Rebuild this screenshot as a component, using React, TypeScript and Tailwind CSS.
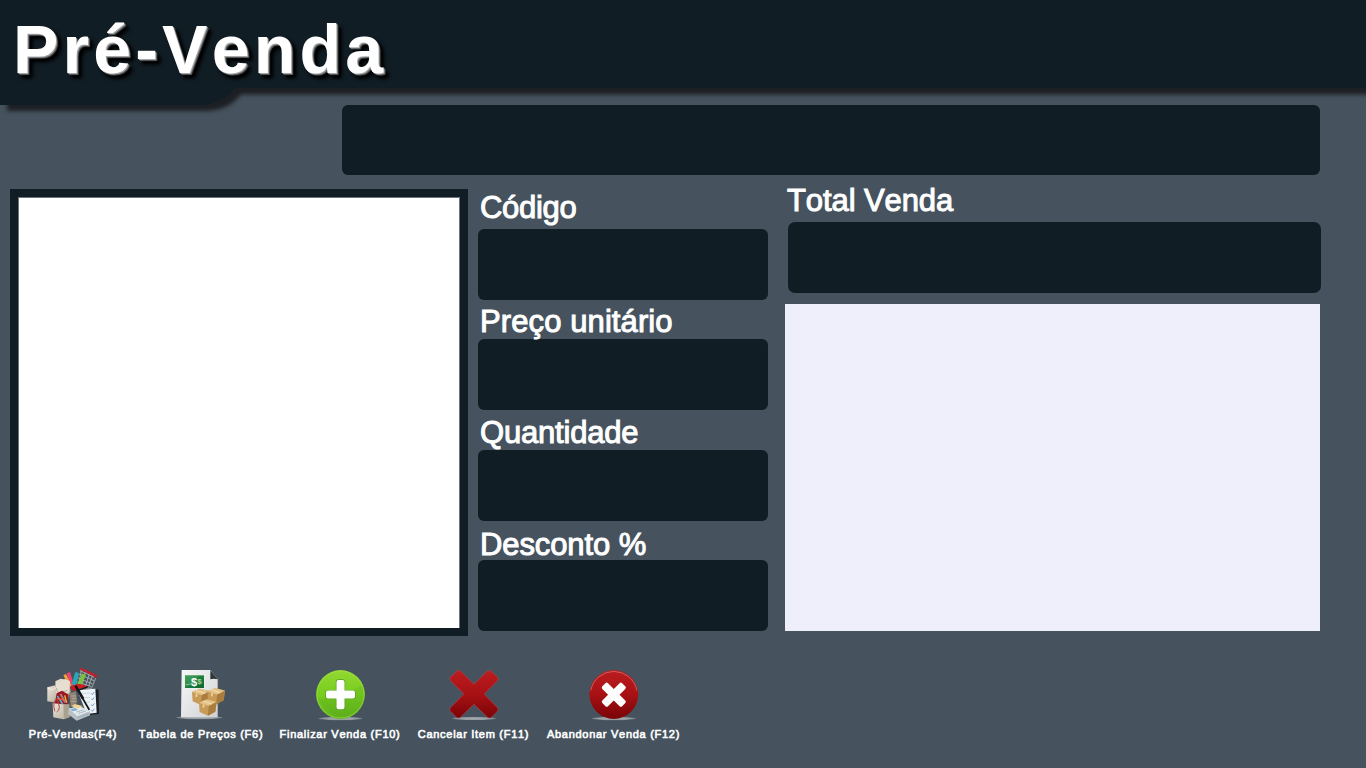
import type { ReactNode } from "react";

const STROKE_LABEL =
  "text-[31px] leading-[36px] whitespace-nowrap text-white [-webkit-text-stroke:1px_white] [font-kerning:none]";

function Field({ label, labelBox }: { label: string; labelBox: string }) {
  return (
    <div>
      <div className={labelBox}>
        <label className={STROKE_LABEL}>{label}</label>
      </div>
      <div className="h-[71px] w-[290px] rounded-md bg-[#111d24]" />
    </div>
  );
}

function Action({ icon, label, box }: { icon: ReactNode; label: string; box: string }) {
  return (
    <button className={`flex flex-col items-center ${box}`}>
      {icon}
      <span className="mt-[2px] text-[11px] leading-[16px] whitespace-nowrap text-white [-webkit-text-stroke:0.6px_white] tracking-[0.72px] [font-kerning:none]">
        {label}
      </span>
    </button>
  );
}

function Gradients() {
  return (
    <svg className="absolute size-0" aria-hidden="true">
      <defs>
        <linearGradient id="green" x1="0" y1="0" x2="0" y2="1">
          <stop offset="0" stopColor="#93d831" />
          <stop offset="0.5" stopColor="#78cd1f" />
          <stop offset="1" stopColor="#5fb01c" />
        </linearGradient>
        <linearGradient id="red" x1="0" y1="0" x2="0" y2="1">
          <stop offset="0" stopColor="#bb1d20" />
          <stop offset="0.5" stopColor="#a81114" />
          <stop offset="1" stopColor="#790407" />
        </linearGradient>
        <linearGradient id="paper" x1="0" y1="0" x2="1" y2="1">
          <stop offset="0" stopColor="#f7f8f8" />
          <stop offset="1" stopColor="#cfd2d4" />
        </linearGradient>
        <linearGradient id="bag" x1="0" y1="0" x2="1" y2="1">
          <stop offset="0" stopColor="#ece6da" />
          <stop offset="1" stopColor="#b5ac9c" />
        </linearGradient>
        <linearGradient id="note" x1="0" y1="0" x2="1" y2="1">
          <stop offset="0" stopColor="#2d9a4c" />
          <stop offset="1" stopColor="#0b6530" />
        </linearGradient>
        <radialGradient id="floor">
          <stop offset="0" stopColor="#a3a8aa" />
          <stop offset="0.75" stopColor="#959da2" />
          <stop offset="1" stopColor="#66727b" />
        </radialGradient>
      </defs>
    </svg>
  );
}

function SalesIcon() {
  return (
    <svg width="56" height="56" viewBox="3 12 168 168" fill="none">
      {/* cart */}
      <path d="M108 20 152 40 M104 30l46 20M102 42l44 18M100 54l42 14M112 18l-8 44M124 24l-10 42M136 30l-12 38M146 34l-14 38" stroke="#a4a8aa" strokeWidth="3" />
      <path d="m156 40-14 34-36-4" stroke="#8d9498" strokeWidth="3.5" />
      <path d="m112 15 42 20" stroke="#c0202c" strokeWidth="7" strokeLinecap="round" />
      <circle cx="155" cy="37" r="5" fill="#b0202c" />
      {/* ribbons */}
      <path d="m68 28 10-4 12 38-12 6z" fill="#e9446c" />
      <path d="m58 34 8-4 16 34-6 6z" fill="#f0a03a" />
      <path d="m94 24 11 3-8 38-14-4z" fill="#27a9b5" />
      <path d="m114 28 12 5-16 34-12-2z" fill="#79c142" />
      <path d="M78 72q20-20 50-6l-4 10q-20-8-34 6z" fill="#cf1a22" />
      {/* far bags */}
      <path d="m34 52 16-8 24 4 6 34-10 28-34-18z" fill="url(#bag)" />
      <path d="m10 70 24-6 10 12-4 40-30-4z" fill="url(#bag)" />
      <path d="m34 62 28-16 16 6-4 34-36 8z" fill="#e6dfd1" />
      <path d="m34 64 8 22 28-6" stroke="#9d9484" strokeWidth="2" />
      <path d="m10 72 14 6 16-10" stroke="#fffaf0" strokeWidth="2" />
      <path d="m76 88 20-6 4 34-20 14z" fill="#8e8274" />
      <path d="m82 96 14 0m-12 8h12m-14 8h12" stroke="#c9c0ab" strokeWidth="2" />
      {/* front bag with contents */}
      <path d="m38 88 16-8 20 12-4 32-38-4z" fill="#9d1420" />
      <path d="m26 118 48 4 2 38-18 6-30-6z" fill="url(#bag)" />
      <path d="m58 124 18-4 2 38-18 8z" fill="#aaa08f" />
      <path d="m40 96 16 24m-6-30 14 26" stroke="#4faed0" strokeWidth="5" />
      <path d="m48 90 14 24m-24-10 24 4" stroke="#ea5b3a" strokeWidth="4" />
      <path d="m62 94 6 22" stroke="#e9c43d" strokeWidth="4" />
      <path d="M32 142q-6-28 2-34t12 22q0 10-8 14" stroke="#b04a44" strokeWidth="3" />
      {/* checklist */}
      <path d="m102 80 56-4 6 2 1 72-32 3z" fill="#191f25" />
      <path d="m100 78 54-4 4 72-30 4z" fill="#eef3f8" />
      <path d="m112 88 26-1m-18 14 18-1m-14 15 14-1m-8 16 8-1" stroke="#b9c2cb" strokeWidth="2" />
      <path d="m142 88 3 4 6-8m-9 20 3 4 6-8m-9 22 3 4 6-8m-9 20 3 4 6-8" stroke="#5f93cf" strokeWidth="2.6" />
      {/* pen */}
      <path d="m96 68 20 34" stroke="#14171a" strokeWidth="8" strokeLinecap="round" />
      <path d="m112 96 24 42" stroke="#14171a" strokeWidth="5" />
      <path d="m100 80 32-12" stroke="#16191c" strokeWidth="4.5" strokeLinecap="round" />
      {/* register */}
      <path d="m74 134 32-8 32 16v12l-40 16-26-20z" fill="#b7c0c4" />
      <path d="m74 134 32-8 32 16-38 14z" fill="#e4eaec" />
      <path d="m82 126 10-6 24 6-14 8z" fill="#f1d391" />
      <path d="m78 136 16-4 8 6-16 4z" fill="#7eaecb" />
      <path d="m98 144 20-6m-14 10 22-7" stroke="#8fa6b2" strokeWidth="3" strokeDasharray="4 2" />
      <path d="m100 162 34-13" stroke="#7da3b8" strokeWidth="2" />
    </svg>
  );
}

function Box({ x, y }: { x: number; y: number }) {
  return (
    <g transform={`translate(${x} ${y})`}>
      <path d="m0 10 24-10 29 8-4 29-22 12-25-11z" fill="#c79b56" />
      <path d="m0 10 24-10 29 8-24 12z" fill="#e3c288" />
      <path d="m29 20 24-12-4 29-22 12z" fill="#aa7c3d" />
      <path d="m11 5 28 9" stroke="#f3deb2" strokeWidth="3" fill="none" />
      <path d="m14 15-1 10" stroke="#ecd3a0" strokeWidth="5" fill="none" />
    </g>
  );
}

function PriceTableIcon() {
  return (
    <svg width="56" height="56" viewBox="3 12 168 168">
      <ellipse cx="82" cy="161" rx="70" ry="5" fill="url(#floor)" />
      <path d="M29 18h86l22 28v114H27z" fill="url(#paper)" />
      <path d="m115 19 22 27q-12-4-22 0z" fill="#2f363a" />
      <path d="M37 32h61v42H37z" fill="#eef2ee" />
      <path d="M39 34h57v38H39z" fill="url(#note)" />
      <path d="M39 68q25 0 41-34H39z" fill="#67b06c" opacity=".3" />
      <path d="M41 62q14 2 22-8" fill="none" stroke="#a9d6a9" strokeWidth="2" />
      <text x="57" y="65" fill="#fff" fontSize="33" fontWeight="bold">$</text>
      <text x="76" y="61" fill="#a5d3a8" fontSize="24" fontWeight="bold">$</text>
      <Box x={60} y={74} />
      <Box x={106} y={72} />
      <Box x={81} y={106} />
    </svg>
  );
}

function FinishIcon() {
  return (
    <svg width="56" height="56" viewBox="0 0 56 56">
      <ellipse cx="28.5" cy="50.5" rx="22" ry="1.7" fill="url(#floor)" />
      <circle cx="28.5" cy="26.5" r="24.4" fill="url(#green)" />
      <circle cx="28.5" cy="26.5" r="23.5" fill="none" stroke="#a9df58" strokeOpacity=".5" />
      <path d="M6 31q20 2 44-14 6 18-7 27-14 9-27-2-7-5-10-11z" fill="#4fa117" opacity=".2" />
      <g fill="#fff" stroke="#5b9e21" strokeWidth="1.4" paintOrder="stroke">
        <path d="M26.5 12h4q2 0 2 2v8.600h8.500q2 0 2 2v4q0 2-2 2h-8.500v8.600q0 2-2 2h-4q-2 0-2-2v-8.600h-8.500q-2 0-2-2v-4q0-2 2-2h8.500V14q0-2 2-2z" />
      </g>
    </svg>
  );
}

function CancelIcon() {
  return (
    <svg width="56" height="56" viewBox="0 0 56 56">
      <ellipse cx="28" cy="50.5" rx="22" ry="1.6" fill="url(#floor)" />
      <path
        d="M11.5 2.8q1.8-1 3.6.8L28 16.2 40.9 3.6q1.8-1.800 3.6-.8l6.9 6.3q1.6 1.8 0 3.6L38.2 26l13.2 13.7q1.6 1.8 0 3.6l-6 6q-2 1.600-3.8 0L28 36.2 14.3 49.3q-1.800 1.6-3.8 0l-6-6q-1.6-1.8 0-3.6L17.8 26 4.6 12.7q-1.600-1.8 0-3.6z"
        fill="url(#red)"
        stroke="#b74248"
        strokeWidth=".6"
      />
    </svg>
  );
}

function LeaveIcon() {
  return (
    <svg width="56" height="56" viewBox="0 0 56 56">
      <ellipse cx="27.8" cy="50.5" rx="22" ry="1.7" fill="url(#floor)" />
      <circle cx="27.8" cy="26.5" r="24.4" fill="url(#red)" />
      <path d="M4.8 22.500a23.4 23.4 0 0 1 46 0" fill="none" stroke="#d6777a" strokeOpacity=".8" strokeWidth=".9" />
      <g transform="rotate(45 27.8 26.7)" fill="#fff">
        <rect x="23.8" y="12.700" width="8" height="28" rx="1.8" />
        <rect x="13.8" y="22.700" width="28" height="8" rx="1.8" />
      </g>
    </svg>
  );
}

export default function App() {
  return (
    <div className="relative isolate h-[768px] w-[1366px] overflow-hidden bg-[#46535e] font-['Liberation_Sans',Arial,sans-serif]">
      <Gradients />
      <svg className="absolute top-0 left-0 -z-10" width="1366" height="120" viewBox="0 0 1366 120" aria-hidden="true">
        <defs>
          <filter id="soft" x="-5%" y="-20%" width="110%" height="140%" colorInterpolationFilters="sRGB">
            <feGaussianBlur stdDeviation="1.9" />
          </filter>
        </defs>
        <path d="M7 0H1390V94.500H241Q228 111 204 111H7z" fill="#1c1f23" filter="url(#soft)" />
        <path d="M0 0H1366V88H235Q222 105 198 105H0z" fill="#111d24" />
      </svg>

      <header className="h-[105px] pt-[9px] pl-[13px]">
        <h1 className="text-[68px] leading-[80px] font-bold tracking-[4.2px] whitespace-nowrap text-white [font-kerning:none] [text-shadow:1px_1px_0_#a4a6a7,2px_2px_1px_#5c5f60,4px_4px_3px_#000,5px_5px_4px_#000]">
          Pré-Venda
        </h1>
      </header>

      <div className="ml-[342px] h-[70px] w-[978px] rounded-md bg-[#111d24]" />

      <main className="flex pl-[10px]">
        <div className="mt-[14px] h-[447px] w-[458px] border-8 border-[#111d24] bg-[#6c757b] pt-px pl-px pr-px">
          <div className="size-full bg-white" />
        </div>

        <section className="ml-[10px] w-[290px]">
          <Field label="Código" labelBox="h-[54px] pt-[15px] pl-[2px] tracking-[-0.3px]" />
          <Field label="Preço unitário" labelBox="h-[39px] pt-[4px] pl-[2px] tracking-[0.1px]" />
          <Field label="Quantidade" labelBox="h-[40px] pt-[5px] pl-[2px] tracking-[-0.2px]" />
          <Field label="Desconto %" labelBox="h-[39px] pt-[6px] pl-[2px] tracking-[-0.1px]" />
        </section>

        <section className="ml-[17px]">
          <div className="h-[47px] pt-[8px] pl-[2px] tracking-[-0.1px]">
            <h2 className={STROKE_LABEL}>Total Venda</h2>
          </div>
          <div className="ml-[3px] h-[71px] w-[533px] rounded-[7px] bg-[#111d24]" />
          <div className="mt-[11px] h-[327px] w-[535px] bg-[#eeeffb]" />
        </section>
      </main>

      <footer className="mt-[32px] flex pl-[18px]">
        <Action icon={<SalesIcon />} label="Pré-Vendas(F4)" box="w-[110px]" />
        <Action icon={<PriceTableIcon />} label="Tabela de Preços (F6)" box="w-[146px]" />
        <Action icon={<FinishIcon />} label="Finalizar Venda (F10)" box="w-[132px]" />
        <Action icon={<CancelIcon />} label="Cancelar Item (F11)" box="w-[135px]" />
        <Action icon={<LeaveIcon />} label="Abandonar Venda (F12)" box="w-[145px]" />
      </footer>
    </div>
  );
}
